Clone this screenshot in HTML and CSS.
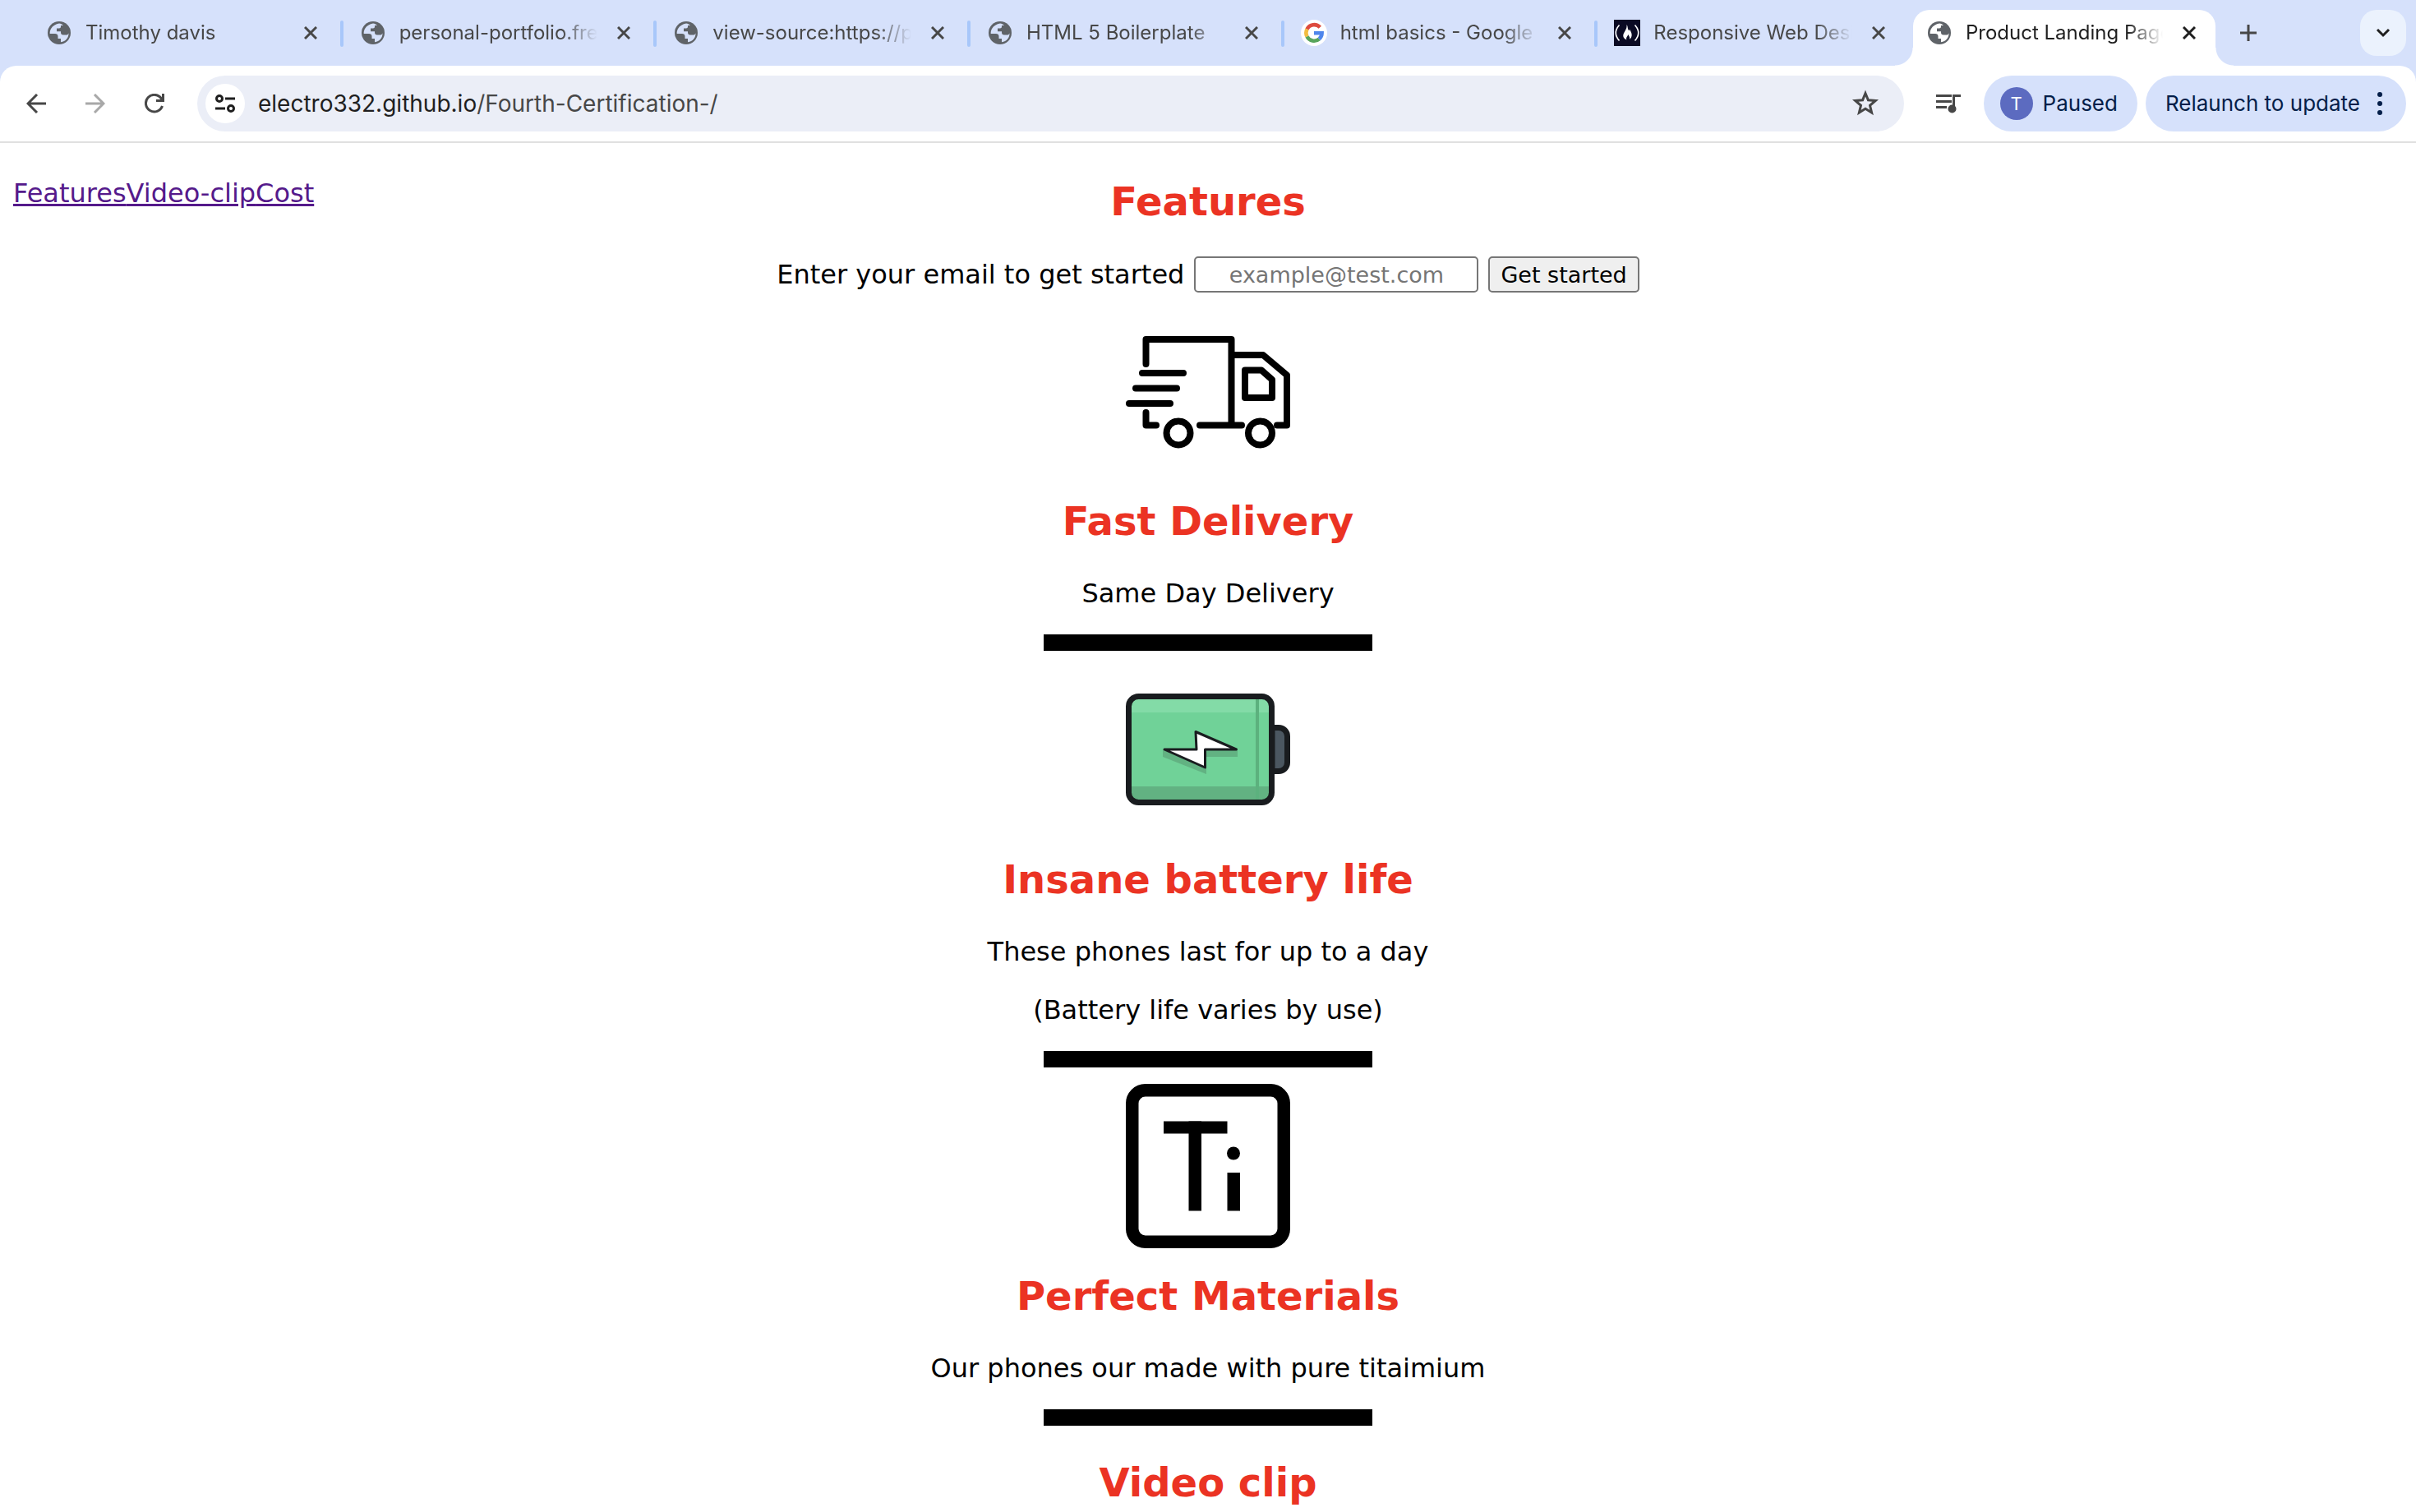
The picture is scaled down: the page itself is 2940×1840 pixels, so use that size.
FILE: index.html
```html
<!DOCTYPE html>
<html lang="en">
<head>
<meta charset="utf-8">
<title>Product Landing Page</title>
<link rel="stylesheet" href="styles.css">
</head>
<body>
<svg class="defs" aria-hidden="true">
  <symbol id="globe" viewBox="0 0 28 28">
    <circle cx="14" cy="14" r="14" fill="#5f6368"/>
    <path d="M14 2.5C10 3 6 5.500 4 9c-1 2-1.500 4-1.300 6h6.300c2 0 3.500 1.200 3.500 3.200V21h3.500v4.200c6-.7 9.700-5.500 9.500-11-.5 1.500-1.500 2.300-3 2.300h-3.500c-2 0-3-1.300-3-3v-1.200H11V8.500h3c1.200 0 2-.8 2-2V5h3C17.500 3.500 16 2.700 14 2.500z" fill="currentColor"/>
  </symbol>
  <symbol id="close" viewBox="0 0 16 16">
    <path d="M1 1l14 14M15 1L1 15" stroke="currentColor" stroke-width="3" fill="none"/>
  </symbol>
</svg>

<header class="browser">
  <div class="strip">
    <div class="tabs">
      <div class="tab"><svg class="fav"><use href="#globe"/></svg><span class="title">Timothy davis</span><button class="x" aria-label="Close tab"><svg><use href="#close"/></svg></button></div>
      <div class="tab"><svg class="fav"><use href="#globe"/></svg><span class="title">personal-portfolio.free</span><button class="x" aria-label="Close tab"><svg><use href="#close"/></svg></button></div>
      <div class="tab"><svg class="fav"><use href="#globe"/></svg><span class="title">view-source:https://pe</span><button class="x" aria-label="Close tab"><svg><use href="#close"/></svg></button></div>
      <div class="tab"><svg class="fav"><use href="#globe"/></svg><span class="title">HTML 5 Boilerplate</span><button class="x" aria-label="Close tab"><svg><use href="#close"/></svg></button></div>
      <div class="tab">
        <svg class="fav big" viewBox="0 0 32 32"><circle cx="16" cy="16" r="16" fill="#fff"/>
          <g fill="none" stroke-width="4.600"><path d="M23.300 9.200A9.700 9.700 0 0 0 7.500 11.500" stroke="#dd4b3e"/><path d="M7.500 11.500a9.700 9.700 0 0 0 0 9" stroke="#f2bd42"/><path d="M7.500 20.500a9.700 9.700 0 0 0 14.800 3" stroke="#58a55c"/><path d="M22.300 23.500a9.700 9.700 0 0 0 3.300-7.200H16" stroke="#4f86ec"/></g></svg>
        <span class="title">html basics - Google Search</span><button class="x" aria-label="Close tab"><svg><use href="#close"/></svg></button></div>
      <div class="tab last">
        <svg class="fav big" viewBox="0 0 32 32"><rect width="32" height="32" fill="#0a0a23"/>
          <path d="M6.500 6.500Q-2 16 6.500 25.500M25.500 6.500q8.500 9.500 0 19" stroke="#fff" stroke-width="1.600" fill="none"/>
          <path d="M15.500 6c2 3 .5 5 3 7.500.5-1 .3-2 .3-2 3 4 4.500 9 .2 12.500.8-3-.8-3.500-1.500-6-.8 2-2.500 3-2.500 5 0 .5.200 1 .500 1.500-4-1.500-5.500-5-3-9 1.500-3 3.500-5 3-9.500z" fill="#fff"/></svg>
        <span class="title">Responsive Web Design</span><button class="x" aria-label="Close tab"><svg><use href="#close"/></svg></button></div>
      <div class="tab active"><svg class="fav"><use href="#globe"/></svg><span class="title">Product Landing Page</span><button class="x" aria-label="Close tab"><svg><use href="#close"/></svg></button></div>
    </div>
    <button class="new" aria-label="New tab"><svg width="20" height="20"><path d="M10 0v20M0 10h20" stroke="#474747" stroke-width="3"/></svg></button>
    <button class="search" aria-label="Search tabs"><svg width="18" height="12"><path d="M2 2l7 7 7-7" stroke="#1f1f1f" stroke-width="3" fill="none"/></svg></button>
  </div>
  <div class="toolbar">
    <button class="nav-btn" aria-label="Back"><svg width="24" height="24"><path d="M13 1L2 12l11 11M2 12h22" stroke="#474747" stroke-width="3" fill="none"/></svg></button>
    <button class="nav-btn" aria-label="Forward"><svg width="24" height="24"><path d="M11 1l11 11-11 11M22 12H0" stroke="#a8a8a8" stroke-width="3" fill="none"/></svg></button>
    <button class="nav-btn" aria-label="Reload"><svg width="24" height="24"><path d="M21.500 15A10.300 10.300 0 1 1 20 5.500l2.500 2.500M22.500 0v8.500H14" stroke="#474747" stroke-width="3" fill="none"/></svg></button>
    <div class="omnibox">
      <button class="site" aria-label="Site information"><svg width="26" height="24"><g fill="none" stroke="#1f1f1f" stroke-width="3"><circle cx="6" cy="6" r="3.500"/><path d="M13 6h12M1 18h12"/><circle cx="20" cy="18" r="3.500"/></g></svg></button>
      <span class="url">electro332.github.io<span class="path">/Fourth-Certification-/</span></span>
      <button class="star" aria-label="Bookmark this page"><svg width="34" height="34" viewBox="0 0 34 34"><path d="M17 4.500l3.400 8.300 8.900.7-6.800 5.800 2.100 8.700-7.600-4.700-7.600 4.700 2.100-8.700-6.800-5.800 8.900-.7z" stroke="#474747" stroke-width="3" fill="none"/></svg></button>
    </div>
    <button class="media" aria-label="Media control"><svg width="32" height="26"><path d="M0 3.500h19M0 10.500h19M0 17.500h13" stroke="#474747" stroke-width="3"/><path d="M21.500 19V3.500H30" stroke="#474747" stroke-width="3" fill="none"/><circle cx="19.500" cy="19.500" r="5" fill="#474747"/></svg></button>
    <button class="pill paused"><span class="avatar">T</span>Paused</button>
    <button class="pill relaunch">Relaunch to update<svg width="8" height="30"><g fill="#041e49"><circle cx="4" cy="4" r="3"/><circle cx="4" cy="15" r="3"/><circle cx="4" cy="26" r="3"/></g></svg></button>
  </div>
</header>

<div class="page">
  <nav class="links"><a href="#features">Features</a><a href="#video">Video-clip</a><a href="#cost">Cost</a></nav>
  <main>
    <h2 id="features">Features</h2>
    <form class="signup"><label for="email">Enter your email to get started</label><input id="email" type="email" placeholder="example@test.com"><button>Get started</button></form>
    <section>
      <svg class="pic" viewBox="0 0 200 200" role="img" aria-label="Delivery truck">
        <g fill="none" stroke="#000" stroke-width="8" stroke-linecap="round" stroke-linejoin="round">
          <path d="M24.500 67V37H128.500v104M20 78H70M12 96.500H62M4 115H54M24.500 126v15.500H37M90 141.500h51M128.500 56H167l29 24.500V141.500H184M145 74.500h20l13 11.500v22h-33z"/>
          <circle cx="64" cy="151" r="14.500"/><circle cx="163.500" cy="151" r="14.500"/></g></svg>
      <h2>Fast Delivery</h2>
      <p>Same Day Delivery</p>
    </section>
    <section>
      <svg class="pic" viewBox="0 0 200 200" role="img" aria-label="Battery">
        <path d="M178 73.500h8a10.500 10.500 0 0 1 10.500 10.500v32a10.500 10.500 0 0 1-10.500 10.500h-8z" fill="#4b5761" stroke="#191c1f" stroke-width="7"/>
        <rect x="3.500" y="35.500" width="174" height="129" rx="12" fill="#70d298"/>
        <path d="M7 39h167v16H7z" fill="#83dba7"/><path d="M7 145h167v16H7z" fill="#62b282"/><path d="M158 39h4v122h-4z" fill="#5cb17e"/>
        <path d="M45 101h91v8H98v21L45 109z" fill="#62b282"/>
        <path d="M85 78.500l49.500 21.500H96.500v22L47 100h39z" fill="#fff" stroke="#191c1f" stroke-width="3" stroke-linejoin="round"/>
        <rect x="3.500" y="35.500" width="174" height="129" rx="12" fill="none" stroke="#191c1f" stroke-width="7"/></svg>
      <h2>Insane battery life</h2>
      <p>These phones last for up to a day</p>
      <p>(Battery life varies by use)</p>
    </section>
    <section>
      <svg class="pic" viewBox="0 0 200 200" role="img" aria-label="Titanium">
        <rect x="7.750" y="7.750" width="184.500" height="184.500" rx="16" fill="none" stroke="#000" stroke-width="15.500"/>
        <rect x="46" y="45.500" width="77.500" height="15"/><rect x="76.500" y="45.500" width="15.500" height="109"/><rect x="123.500" y="108" width="15.500" height="46.500"/><circle cx="131" cy="84.500" r="8"/></svg>
      <h2>Perfect Materials</h2>
      <p>Our phones our made with pure titaimium</p>
    </section>
    <h2 id="video">Video clip</h2>
  </main>
</div>
</body>
</html>
```
FILE: styles.css
```css
* { box-sizing: border-box; }
html { overflow: hidden; }
body { margin: 0; background: #fff; color: #000; font-family: Verdana, "DejaVu Sans", sans-serif; font-size: 32px; line-height: 39px; }
svg { display: block; }
.defs { display: none; }

.browser { background: #d6e1fb; font-family: Inter, sans-serif; color: #474747; }
.browser button { border: 0; padding: 0; margin: 0; background: none; font: inherit; color: inherit; display: flex; align-items: center; justify-content: center; flex: none; }

.strip { display: flex; height: 80px; padding: 12px 12px 0 36px; }
.tabs { flex: 1; display: grid; grid-template-columns: repeat(6, minmax(0, 1fr)) 370px; }
.tab { display: flex; align-items: center; height: 56px; padding: 0 28px 0 20px; border-right: 4px solid transparent; position: relative; font-size: 24px; line-height: 32px; }
.tab::after { content: ""; position: absolute; right: -4px; top: 13px; width: 4px; height: 32px; border-radius: 2px; background: #a8c7fa; }
.tab.last::after { display: none; }
.fav { width: 28px; height: 28px; margin: 0 18px 0 2px; flex: none; color: #d6e1fb; }
.active .fav { color: #fff; }
.fav.big { width: 32px; height: 32px; margin: 0 16px 0 0; }
.title { flex: 1; min-width: 0; overflow: hidden; white-space: nowrap; margin-right: 24px; -webkit-mask-image: linear-gradient(to left, transparent, #000 44px); mask-image: linear-gradient(to left, transparent, #000 44px); }
.x svg { width: 16px; height: 16px; }
.tab.active { height: 68px; margin-left: 2px; padding: 0 24px 12px 16px; border: 0; border-radius: 20px 20px 0 0; background: #fff; color: #1f1f1f; }
.tab.active .title { margin-right: 24px; }
.tab.active::before, .tab.active::after { content: ""; position: absolute; top: auto; bottom: 0; width: 22px; height: 22px; border-radius: 0; }
.tab.active::before { left: -22px; background: radial-gradient(circle at 0 0, transparent 21px, #fff 22px); }
.tab.active::after { right: -22px; background: radial-gradient(circle at 100% 0, transparent 21px, #fff 22px); }
.browser .new { width: 56px; height: 56px; margin: 0 108px 0 12px; }
.browser .search { width: 56px; height: 56px; border-radius: 20px; background: #ebf2fd; }

.toolbar { display: flex; align-items: center; height: 94px; padding: 0 12px 0 8px; background: #fff; border-bottom: 2px solid #e0e0e0; border-radius: 20px 20px 0 0; }
.nav-btn { width: 72px; height: 68px; }
.omnibox { flex: 1; display: flex; align-items: center; height: 68px; margin-left: 16px; padding: 0 30px 0 10px; border-radius: 34px; background: #ebeef7; }
.omnibox .site { width: 48px; height: 48px; border-radius: 24px; background: #fff; }
.url { flex: 1; padding-left: 16px; font-size: 28px; line-height: 36px; color: #1f1f1f; }
.path { color: #474747; }
.browser .media { width: 32px; margin: 0 26px 0 39px; }
.browser .pill { height: 68px; border-radius: 34px; background: #d6e1fb; color: #041e49; font-size: 26px; line-height: 32px; }
.browser .paused { padding: 0 24px 0 20px; margin-right: 10px; gap: 12px; }
.browser .relaunch { padding: 0 28px 0 24px; gap: 20px; }
.avatar { width: 40px; height: 40px; border-radius: 20px; background: #5c6bc0; color: #fff; font-size: 22px; line-height: 40px; }

.page { display: grid; grid-template-columns: 1fr auto 1fr; padding: 2px 16px 0; }
.links { padding-top: 40px; }
.links a { color: #551a8b; }
main { text-align: center; }
h2 { margin: 40px 0; font-size: 48px; line-height: 58px; font-weight: bold; color: #eb3323; }
p { margin: 0 0 32px; }
.signup { display: flex; align-items: center; justify-content: center; gap: 12px; height: 44px; margin: -2px 0 20px; }
.signup input { width: 346px; height: 44px; border: 2px solid #767676; border-radius: 5px; background: #fff; text-align: center; font: 27px Verdana, "DejaVu Sans", sans-serif; padding: 0; }
.signup input::placeholder { color: #757575; }
.signup button { height: 44px; padding: 0 13px; border: 2px solid #767676; border-radius: 5px; background: #efefef; color: #000; font: 27px Verdana, "DejaVu Sans", sans-serif; }
section { margin-bottom: 20px; }
section p:last-child { margin-bottom: 30px; }
section::after { content: ""; display: block; width: 400px; height: 20px; margin: 0 auto; background: #000; }
section h2 { margin-top: 29px; }
.pic { width: 200px; height: 200px; margin: 0 auto; }
```
